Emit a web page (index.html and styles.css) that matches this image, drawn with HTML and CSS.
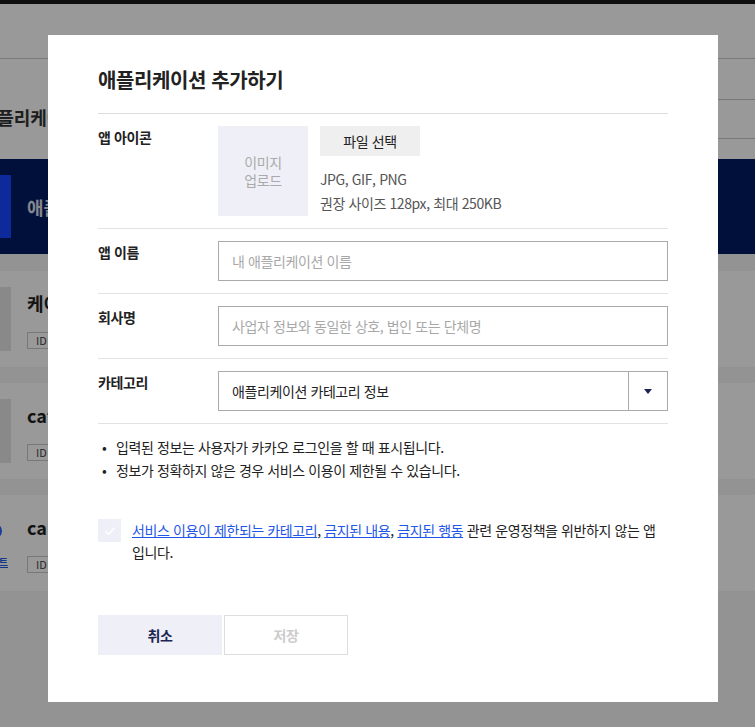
FILE: index.html
```html
<!DOCTYPE html>
<html lang="ko">
<head>
<meta charset="utf-8">
<title>애플리케이션 추가하기</title>
<link rel="stylesheet" href="styles.css">
</head>
<body>
<div class="page">
  <div class="topbar"></div>
  <header class="gnb"></header>
  <section class="title-area">
    <h2 class="page-title">내 애플리케이션</h2>
    <div class="search-box"></div>
  </section>
  <section class="banner">
    <div class="banner-tab"></div>
    <span class="banner-text">애플리케이션 추가하기</span>
  </section>
  <ul class="app-list">
    <li class="app-card">
      <div class="thumb"></div>
      <div class="info"><strong class="app-name">케이앱</strong><span class="app-id">ID 123456</span></div>
    </li>
    <li class="app-card">
      <div class="thumb"></div>
      <div class="info"><strong class="app-name">cafe</strong><span class="app-id">ID 234567</span></div>
    </li>
    <li class="app-card">
      <div class="thumb thumb-logo"><span class="logo-dot"></span><a class="logo-link" href="#">테스트</a></div>
      <div class="info"><strong class="app-name">camp</strong><span class="app-id">ID 345678</span></div>
    </li>
  </ul>
</div>

<div class="dim"></div>

<div class="modal">
  <h1 class="modal-title">애플리케이션 추가하기</h1>

  <div class="form-row">
    <div class="form-label">앱 아이콘</div>
    <div class="icon-field">
      <div class="icon-upload">이미지<br>업로드</div>
      <div class="icon-side">
        <button class="file-btn" type="button">파일 선택</button>
        <p class="icon-hint">JPG, GIF, PNG<br>권장 사이즈 128px, 최대 250KB</p>
      </div>
    </div>
  </div>

  <div class="form-row">
    <div class="form-label">앱 이름</div>
    <input class="text-input" type="text" placeholder="내 애플리케이션 이름">
  </div>

  <div class="form-row">
    <div class="form-label">회사명</div>
    <input class="text-input" type="text" placeholder="사업자 정보와 동일한 상호, 법인 또는 단체명">
  </div>

  <div class="form-row">
    <div class="form-label">카테고리</div>
    <div class="select">
      <span class="select-value">애플리케이션 카테고리 정보</span>
      <span class="select-arrow"><svg width="8" height="5" viewBox="0 0 8 5"><path d="M0 0H8L4 5Z" fill="#1b2452"/></svg></span>
    </div>
  </div>

  <ul class="notes">
    <li>입력된 정보는 사용자가 카카오 로그인을 할 때 표시됩니다.</li>
    <li>정보가 정확하지 않은 경우 서비스 이용이 제한될 수 있습니다.</li>
  </ul>

  <div class="agree">
    <span class="checkbox"><svg width="12" height="10" viewBox="0 0 12 10"><path d="M1.5 5.2L4.6 8.2L10.5 1.8" fill="none" stroke="#fff" stroke-width="1.5"/></svg></span>
    <p class="agree-text"><a href="#">서비스 이용이 제한되는 카테고리</a>, <a href="#">금지된 내용</a>, <a href="#">금지된 행동</a> 관련 운영정책을 위반하지 않는 앱입니다.</p>
  </div>

  <div class="actions">
    <button class="btn btn-cancel" type="button">취소</button>
    <button class="btn btn-save" type="button">저장</button>
  </div>
</div>
</body>
</html>
```

FILE: styles.css
```css
* { box-sizing: border-box; }

html, body {
  margin: 0;
  width: 755px;
  height: 727px;
  overflow: hidden;
}

body {
  font-family: "Noto Sans CJK KR", "Noto Sans", sans-serif;
  background: #f5f5f5;
  color: #333;
}

/* ---------- background page ---------- */
.page {
  width: 900px;
}

.topbar {
  height: 4px;
  background: #1a1a1a;
}

.gnb {
  height: 55px;
  background: #fff;
  border-bottom: 1px solid #cccccc;
}

.title-area {
  height: 100px;
  background: #fff;
  display: flex;
  justify-content: space-between;
  align-items: flex-start;
}

.page-title {
  margin: 46px 0 0 -41px;
  font-size: 18px;
  line-height: 24px;
  font-weight: 700;
  color: #333;
  white-space: nowrap;
}

.search-box {
  margin-top: 40px;
  width: 300px;
  height: 40px;
  border-top: 1px solid #c8c8c8;
  border-bottom: 1px solid #c8c8c8;
  background: #fff;
}

.banner {
  height: 95px;
  background: #001b61;
  display: flex;
  align-items: center;
  gap: 16px;
  margin-left: -53px;
}

.banner-tab {
  width: 64px;
  height: 63px;
  background: #1845ff;
}

.banner-text {
  font-size: 18px;
  font-weight: 700;
  color: #dfe0ea;
  white-space: nowrap;
}

.app-list {
  list-style: none;
  margin: 0 0 0 -53px;
  padding: 17px 0 0;
  display: flex;
  flex-direction: column;
  gap: 16px;
}

.app-card {
  height: 96px;
  background: #fff;
  padding: 16px 0;
  display: flex;
  gap: 16px;
}

.thumb {
  width: 64px;
  height: 64px;
  background: #e4e4e4;
  flex: none;
}

.thumb-logo {
  background: transparent;
  position: relative;
}

.logo-dot {
  position: absolute;
  right: 9px;
  top: 12px;
  width: 16px;
  height: 16px;
  border-radius: 50%;
  background: #2d63ff;
}

.logo-link {
  position: absolute;
  right: 3px;
  top: 44px;
  font-size: 10px;
  line-height: 14px;
  color: #1f57e0;
  font-weight: 700;
  white-space: nowrap;
}

.info {
  padding-top: 4px;
  display: flex;
  flex-direction: column;
  align-items: flex-start;
}

.app-name {
  font-size: 18px;
  line-height: 24px;
  font-weight: 700;
  color: #222;
}

.app-id {
  margin-top: 17px;
  height: 17px;
  padding: 0 8px;
  border: 1px solid #c9c9c9;
  font-size: 11px;
  line-height: 15px;
  color: #444;
  white-space: nowrap;
}

/* ---------- dim ---------- */
.dim {
  position: fixed;
  inset: 0;
  background: rgba(0, 0, 0, 0.4);
}

/* ---------- modal ---------- */
.modal {
  position: fixed;
  left: 48px;
  top: 35px;
  width: 670px;
  height: 667px;
  background: #fff;
  padding: 0 50px;
  color: #222;
  letter-spacing: -0.4px;
}

.modal-title {
  margin: 0;
  padding: 31px 0 20px;
  font-size: 20px;
  line-height: 27px;
  font-weight: 700;
  color: #222;
  border-bottom: 1px solid #dddddd;
}

.form-row {
  display: grid;
  grid-template-columns: 120px 1fr;
  align-items: start;
  padding: 12px 0;
  border-bottom: 1px solid #e2e2e2;
}

.form-label {
  font-size: 14px;
  line-height: 22px;
  font-weight: 700;
  color: #222;
}

.icon-field {
  display: flex;
  gap: 12px;
}

.icon-upload {
  width: 90px;
  height: 90px;
  background: #eff0f7;
  display: flex;
  align-items: center;
  justify-content: center;
  text-align: center;
  font-size: 14px;
  line-height: 18px;
  color: #aaaaaa;
}

.icon-side {
  display: flex;
  flex-direction: column;
  align-items: flex-start;
}

.file-btn {
  width: 100px;
  height: 30px;
  border: 0;
  background: #efefef;
  font-family: inherit;
  font-size: 14px;
  letter-spacing: -0.4px;
  color: #222;
  padding: 0;
}

.icon-hint {
  margin: 11px 0 0;
  font-size: 14px;
  line-height: 24px;
  color: #555;
}

.text-input {
  width: 100%;
  height: 40px;
  border: 1px solid #aaaaaa;
  border-radius: 0;
  padding: 0 13px;
  font-family: inherit;
  font-size: 14px;
  letter-spacing: -0.4px;
  color: #222;
  outline: none;
}

.text-input::placeholder {
  color: #a8a8a8;
}

.select {
  height: 40px;
  border: 1px solid #aaaaaa;
  display: flex;
  align-items: stretch;
}

.select-value {
  flex: 1;
  padding: 0 13px;
  font-size: 14px;
  line-height: 38px;
  color: #222;
}

.select-arrow {
  width: 39px;
  border-left: 1px solid #aaaaaa;
  display: flex;
  align-items: center;
  justify-content: center;
}

.notes {
  list-style: none;
  margin: 12px 0 0;
  padding: 0;
  font-size: 14px;
  line-height: 23px;
  color: #222;
}

.notes li {
  display: flex;
}

.notes li::before {
  content: "•";
  width: 14px;
  padding-left: 4px;
  flex: none;
}

.agree {
  margin-top: 37px;
  display: flex;
  align-items: flex-start;
  gap: 11px;
}

.checkbox {
  width: 23px;
  height: 23px;
  flex: none;
  background: #eff0f7;
  display: flex;
  align-items: center;
  justify-content: center;
}

.agree-text {
  margin: 0;
  padding-right: 6px;
  font-size: 14px;
  line-height: 22px;
  color: #222;
}

.agree-text a {
  color: #1f57e6;
  text-decoration: underline;
}

.actions {
  margin-top: 52px;
  display: flex;
  gap: 2px;
}

.btn {
  width: 124px;
  height: 40px;
  font-family: inherit;
  font-size: 14px;
  letter-spacing: -0.4px;
  font-weight: 700;
  padding: 0;
}

.btn-cancel {
  border: 0;
  background: #eff0f7;
  color: #1b2452;
}

.btn-save {
  background: #fff;
  border: 1px solid #dddddd;
  color: #cccccc;
}
```
